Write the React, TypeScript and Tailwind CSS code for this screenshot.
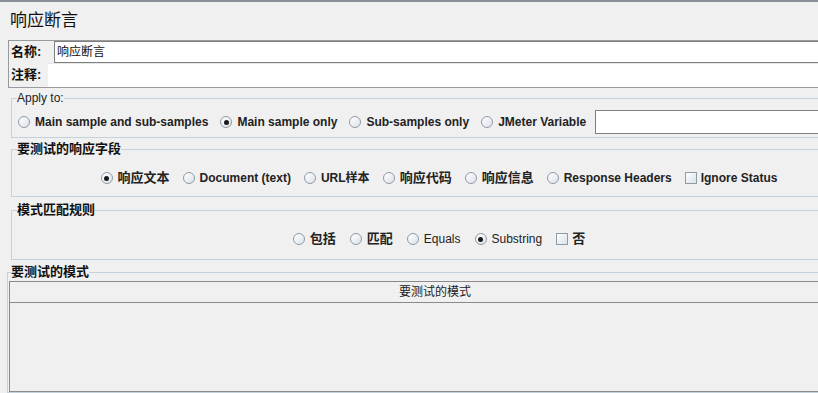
import React from 'react';

const FONT = { fontFamily: '"Liberation Sans", "Noto Sans CJK SC", sans-serif' };

const isCjk = (s: string) => /^[\u4e00-\u9fff]+$/.test(s);

function Radio({ label, checked = false, bold = true }: { label: string; checked?: boolean; bold?: boolean }) {
  return (
    <label className={`flex items-center gap-[5px] shrink-0 whitespace-nowrap text-[#222] ${isCjk(label) ? 'text-[13px]' : 'text-[12px]'}`}>
      <span className="w-[12px] h-[12px] rounded-full border border-[#8f9aa5] bg-gradient-to-br from-white to-[#dde3e9] flex items-center justify-center">
        {checked && <span className="w-[5px] h-[5px] rounded-full bg-[#1a1a1a]" />}
      </span>
      <span className={bold ? 'font-bold' : 'font-normal'}>{label}</span>
    </label>
  );
}

function Check({ label }: { label: string }) {
  return (
    <label className={`flex items-center gap-[4px] shrink-0 whitespace-nowrap font-bold text-[#222] ${isCjk(label) ? 'text-[13px]' : 'text-[12px]'}`}>
      <span className="w-[12px] h-[12px] border border-[#8f9aa5] bg-gradient-to-br from-white to-[#dbe2ea]" />
      <span>{label}</span>
    </label>
  );
}

export default function App() {
  return (
    <div className="w-[818px] h-[393px] overflow-hidden bg-[#f0f0f0] border-t-2 border-[#8a9097]" style={FONT}>
      <div className="w-[862px] h-full flex flex-col">
        {/* Title */}
        <div className="h-[38px] flex items-center pl-[10px] text-[17px] text-[#111] shrink-0">响应断言</div>

        {/* Name / comments */}
        <div className="ml-[8px] h-[48px] border border-[#9a9a9a] flex flex-col shrink-0">
          <div className="h-[22px] flex">
            <span className="w-[45px] pl-[2px] flex items-center text-[13px] font-bold text-[#111]">名称:</span>
            <div className="flex-1 border border-[#7f7f7f] bg-white flex items-center pl-[2px] text-[12px] text-[#111]">响应断言</div>
          </div>
          <div className="flex-1 flex">
            <span className="w-[39px] pl-[2px] flex items-center text-[13px] font-bold text-[#111]">注释:</span>
            <div className="flex-1 bg-white border-t border-[#e6e6e6]" />
          </div>
        </div>

        {/* Apply to */}
        <fieldset className="ml-[11px] mt-[3px] border border-[#c5d1db] pl-[5px] shrink-0">
          <legend className="text-[12px] text-[#222] h-[14px] leading-[14px]">Apply to:</legend>
          <div className="pt-[5px] pb-[3px] h-[32px] flex items-center gap-[12px] pl-[1px]">
            <Radio label="Main sample and sub-samples" />
            <Radio label="Main sample only" checked />
            <Radio label="Sub-samples only" />
            <Radio label="JMeter Variable" />
            <div className="flex-1 h-[24px] ml-[-3px] bg-white border border-[#7f7f7f]" />
          </div>
        </fieldset>

        {/* Response field */}
        <fieldset className="ml-[11px] mt-[4px] border border-[#c5d1db] pl-[5px] shrink-0">
          <legend className="text-[13px] font-bold text-[#111] h-[14px] leading-[14px]">要测试的响应字段</legend>
          <div className="pt-[10px] pb-[6px] h-[40px] flex items-center justify-center gap-[13px]">
            <Radio label="响应文本" checked />
            <Radio label="Document (text)" />
            <Radio label="URL样本" />
            <Radio label="响应代码" />
            <Radio label="响应信息" />
            <Radio label="Response Headers" />
            <Check label="Ignore Status" />
          </div>
        </fieldset>

        {/* Pattern matching rules */}
        <fieldset className="ml-[11px] mt-[6px] border border-[#c5d1db] pl-[5px] shrink-0">
          <legend className="text-[13px] font-bold text-[#111] h-[14px] leading-[14px]">模式匹配规则</legend>
          <div className="pt-[10px] pb-[8px] h-[42px] flex items-center justify-center gap-[14px]">
            <Radio label="包括" />
            <Radio label="匹配" />
            <Radio label="Equals" bold={false} />
            <Radio label="Substring" checked bold={false} />
            <Check label="否" />
          </div>
        </fieldset>

        {/* Patterns to test */}
        <fieldset className="ml-[7px] mt-[5px] border border-[#c5d1db] pl-[1px] flex-1 min-h-0 flex flex-col">
          <legend className="ml-[2px] text-[13px] font-bold text-[#111] h-[14px] leading-[14px]">要测试的模式</legend>
          <div className="mt-[2px] flex-1 border border-[#8a8a8a] flex flex-col">
            <div className="h-[21px] border-b border-[#8a8a8a] flex items-center justify-center text-[12px] text-[#222]">要测试的模式</div>
            <div className="flex-1 bg-[#f0f0f0]" />
          </div>
        </fieldset>
      </div>
    </div>
  );
}
